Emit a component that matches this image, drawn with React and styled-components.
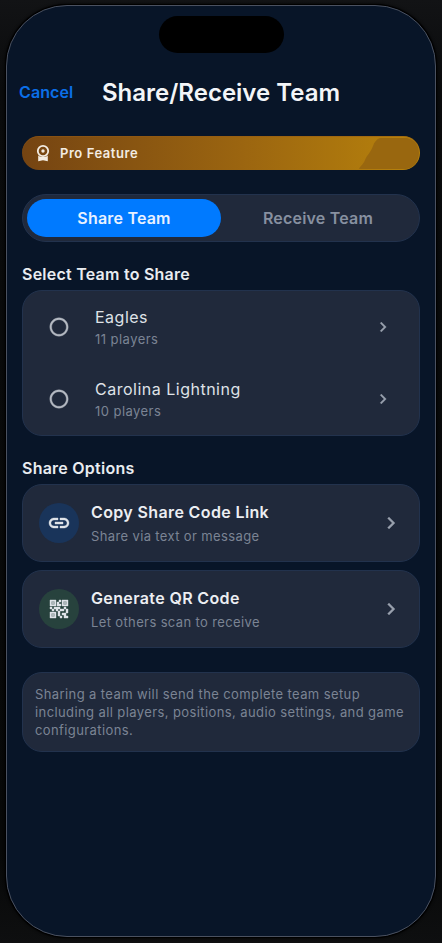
import styled, { createGlobalStyle } from "styled-components";
import {
  MdChevronRight,
  MdLink,
  MdQrCode2,
  MdRadioButtonUnchecked,
} from "react-icons/md";

const teams = [
  { id: 1, name: "Eagles", players: 11 },
  { id: 2, name: "Carolina Lightning", players: 10 },
];

const options = [
  {
    id: "link",
    icon: MdLink,
    tint: "#19345a",
    title: "Copy Share Code Link",
    hint: "Share via text or message",
  },
  {
    id: "qr",
    icon: MdQrCode2,
    tint: "#27423d",
    title: "Generate QR Code",
    hint: "Let others scan to receive",
  },
];

const App = () => {
  return (
    <>
      <GlobalStyle />
      <Backdrop>
        <Phone>
          <Island />
          <Header>
            <Cancel>Cancel</Cancel>
            <Title>Share/Receive Team</Title>
          </Header>
          <Content>
            <ProBanner>
              <Shine viewBox="0 0 61 31" preserveAspectRatio="none">
                <path d="M21 0H48C57 2 60 8 60 15C60 24 54 31 46 31H0C1 28 4 27 6 22C8 17 12 14 14 8C15 4 18 1 21 0Z" />
              </Shine>
              <Medal viewBox="0 0 20 20">
                <circle cx="10" cy="8" r="5.2" />
                <circle className="dot" cx="10" cy="8" r="1.7" />
                <path d="M5.2 12.4C8 14.4 12 14.4 14.8 12.4V18.3L10 17.2L5.2 18.3Z" />
              </Medal>
              <span>Pro Feature</span>
            </ProBanner>
            <Tabs>
              <Tab $active>Share Team</Tab>
              <Tab>Receive Team</Tab>
            </Tabs>
            <SectionTitle>Select Team to Share</SectionTitle>
            <TeamList>
              {teams.map((team) => (
                <TeamRow key={team.id}>
                  <Radio size={22} />
                  <TeamText>
                    <h3>{team.name}</h3>
                    <p>{team.players} players</p>
                  </TeamText>
                  <Chevron size={20} />
                </TeamRow>
              ))}
            </TeamList>
            <SectionTitle>Share Options</SectionTitle>
            <OptionList>
              {options.map(({ id, icon: Icon, tint, title, hint }) => (
                <Option key={id}>
                  <OptionIcon $tint={tint}>
                    <Icon size={24} />
                  </OptionIcon>
                  <OptionText>
                    <h3>{title}</h3>
                    <p>{hint}</p>
                  </OptionText>
                  <Chevron size={24} />
                </Option>
              ))}
            </OptionList>
            <Note>
              Sharing a team will send the complete team setup including all
              players, positions, audio settings, and game configurations.
            </Note>
          </Content>
        </Phone>
      </Backdrop>
    </>
  );
};

const GlobalStyle = createGlobalStyle`
  * {
    box-sizing: border-box;
    margin: 0;
    padding: 0;
  }
  body {
    background: #0a0b0c;
    font-family: Inter, sans-serif;
    overflow: hidden;
  }
  button {
    border: none;
    background: none;
    font-family: inherit;
    cursor: pointer;
  }
  svg {
    flex-shrink: 0;
  }
  /* the icons' bounding box path must not pick up a stroke */
  svg path[fill="none"] {
    stroke: none;
  }
`;

const Backdrop = styled.div`
  width: 442px;
  height: 943px;
  padding: 5px 6px 6px;
  background: linear-gradient(#121315, #0a0b0c 90px, #070808 850px, #0e0f10);
`;

const Phone = styled.div`
  width: 430px;
  height: 932px;
  display: flex;
  flex-direction: column;
  border: 1px solid #4a5160;
  border-radius: 61px;
  background: #081528;
  box-shadow: 0 0 0 1px #000, 0 0 3px 1px #000;
`;

const Island = styled.div`
  width: 125px;
  height: 37px;
  margin: 10px 0 0 151.5px;
  border-radius: 19px;
  background: #000;
`;

const Header = styled.header`
  height: 56px;
  margin-top: 11px;
  display: flex;
  align-items: center;
`;

const Cancel = styled.button`
  width: 95px;
  padding-left: 12px;
  text-align: left;
  color: #0b6fe8;
  font-size: 16px;
  font-weight: 600;
  letter-spacing: 0.1px;
`;

const Title = styled.h1`
  color: #f3f5f8;
  font-size: 24px;
  font-weight: 600;
  letter-spacing: 0;
  white-space: nowrap;
`;

const Content = styled.main`
  padding: 16px 15px 0;
`;

const ProBanner = styled.div`
  position: relative;
  height: 34px;
  display: flex;
  align-items: center;
  gap: 7px;
  padding-left: 11px;
  border-radius: 17px;
  background: linear-gradient(90deg, #754412, #9b6510 55%, #b8830c);
  box-shadow: inset 0 1px 0 rgba(150, 90, 20, 0.5);
  color: #f3ece2;
  font-size: 13px;
  font-weight: 600;
  letter-spacing: 0.55px;
`;

/* darker patch at the right end of the banner */
const Shine = styled.svg`
  position: absolute;
  top: 2px;
  right: 0;
  width: 61px;
  height: 31px;
  fill: #99670f;
`;

const Medal = styled.svg`
  width: 20px;
  height: 20px;
  fill: #f3ece2;
  circle {
    fill: none;
    stroke: #f3ece2;
    stroke-width: 1.8;
  }
  .dot {
    fill: #f3ece2;
    stroke: none;
  }
`;

const Tabs = styled.div`
  height: 48px;
  margin-top: 24px;
  display: flex;
  padding: 4px;
  border: 1px solid #22324d;
  border-radius: 24px;
  background: #20293b;
`;

const Tab = styled.button`
  flex: 1;
  border-radius: 19px;
  background: ${(props) => (props.$active ? "#007aff" : "transparent")};
  color: ${(props) => (props.$active ? "#e8f1ff" : "#8790a0")};
  font-size: 16px;
  font-weight: 600;
  letter-spacing: 0.2px;
`;

const SectionTitle = styled.h2`
  height: 24px;
  margin: 20px 0 4px;
  color: #e9ecf0;
  font-size: 16px;
  font-weight: 600;
  line-height: 24px;
  letter-spacing: 0.24px;
`;

const TeamList = styled.div`
  border: 1px solid #22324d;
  border-radius: 20px;
  background: #20293b;
`;

const TeamRow = styled.div`
  height: 72px;
  display: flex;
  align-items: center;
  padding: 0 26px 0 25px;
`;

const Radio = styled(MdRadioButtonUnchecked)`
  color: #b4b9c2;
  stroke: #b4b9c2;
  stroke-width: 0.4px;
`;

const TeamText = styled.div`
  flex: 1;
  margin-left: 25px;
  h3 {
    color: #dfe2e7;
    font-size: 16px;
    font-weight: 400;
    line-height: 24px;
    letter-spacing: 0.5px;
  }
  p {
    color: #7b8494;
    font-size: 13px;
    line-height: 20px;
    letter-spacing: 0.45px;
  }
`;

const Chevron = styled(MdChevronRight)`
  color: #98a0ad;
  stroke: #98a0ad;
  stroke-width: 0.3px;
`;

const OptionList = styled.div`
  display: flex;
  flex-direction: column;
  gap: 8px;
`;

const Option = styled.div`
  height: 78px;
  display: flex;
  align-items: center;
  padding: 0 16px;
  border: 1px solid #22324d;
  border-radius: 20px;
  background: #20293b;
`;

const OptionIcon = styled.div`
  width: 40px;
  height: 40px;
  display: flex;
  align-items: center;
  justify-content: center;
  border-radius: 50%;
  background: ${(props) => props.$tint};
  color: #dfe3e8;
  svg {
    stroke-width: 0.4px;
  }
`;

const OptionText = styled.div`
  flex: 1;
  margin-left: 12px;
  h3 {
    color: #eceef2;
    font-size: 16px;
    font-weight: 600;
    line-height: 24px;
    letter-spacing: 0.37px;
  }
  p {
    margin-top: 2px;
    color: #7b8494;
    font-size: 13px;
    line-height: 20px;
    letter-spacing: 0.37px;
  }
`;

const Note = styled.p`
  height: 80px;
  margin-top: 24px;
  padding: 12px;
  border: 1px solid #22324d;
  border-radius: 20px;
  background: #20293b;
  color: #7b8494;
  font-size: 13px;
  line-height: 18px;
  letter-spacing: 0.4px;
`;

export default App;
